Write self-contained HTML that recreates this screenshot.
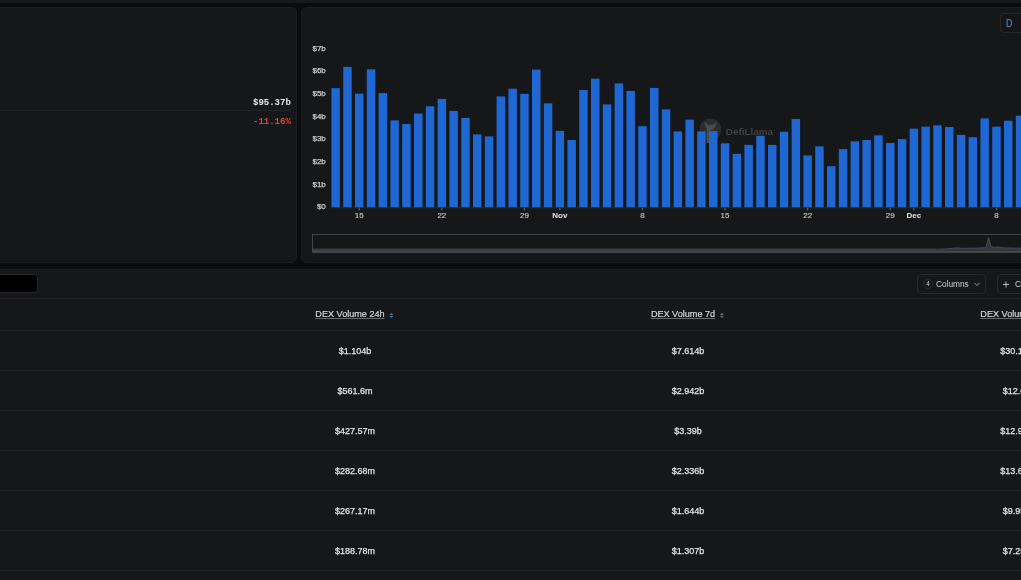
<!DOCTYPE html>
<html><head><meta charset="utf-8">
<style>
*{margin:0;padding:0;box-sizing:border-box}
html,body{width:1021px;height:580px;overflow:hidden;background:#0b0c0e;font-family:"Liberation Sans",sans-serif}
.abs{position:absolute}
#topstrip{position:absolute;left:0;top:0;width:1021px;height:3px;background:#18191c}
.card{position:absolute;background:#161719;border:1px solid #1c1d20;border-radius:6px}
#lcard{left:-20px;top:7px;width:317px;height:256px}
#ccard{left:301.4px;top:7px;width:740px;height:256px}
.mono{font-family:"Liberation Mono",monospace;font-weight:bold;position:absolute;font-size:9px;line-height:10px;white-space:nowrap}
#sep1{position:absolute;left:0;top:110px;width:291px;height:1px;background:#222326}
#dbtn{position:absolute;left:1000px;top:13px;width:40px;height:20px;border:1px solid #26282b;border-radius:4px;background:#141517}
#dbtn span{position:absolute;left:4.8px;top:4.6px;font-size:10.2px;line-height:10px;color:#5b88d4;-webkit-text-stroke:0.1px #5b88d4;transform:scaleX(0.86);transform-origin:0 0}
svg{position:absolute;left:0;top:0}
.bars rect{fill:#1f67d2}
.yl text{font-size:8px;fill:#cdcdcd;stroke:#cdcdcd;stroke-width:0.25px;text-anchor:end}
.md{font-size:8px;fill:#c4c4c4;stroke:#c4c4c4;stroke-width:0.15px;text-anchor:middle}
.mb{font-size:8px;fill:#e6e6e6;font-weight:bold;text-anchor:middle}
.ticks line{stroke:#77787a;stroke-width:0.9}
#table{position:absolute;left:0;top:269px;width:1021px;height:320px;background:#161719}
#search{position:absolute;left:-20px;top:274px;width:58px;height:19px;background:#000;border:1px solid #26282b;border-radius:4px}
.hline{position:absolute;left:0;width:1021px;height:1px;background:#222326}
.btn{position:absolute;top:274px;height:20px;border:1px solid #26282b;border-radius:4px}
.th{position:absolute;top:309px;font-size:9.1px;line-height:10px;color:#d6d6d6;-webkit-text-stroke:0.2px #d6d6d6;white-space:nowrap;transform:translateX(-50%)}
.th u{text-decoration:underline;text-decoration-color:#6a6b6d;text-underline-offset:1px}
.row{position:absolute;left:0;width:1021px;height:40px}
.v{position:absolute;top:15.8px;font-size:9px;line-height:10px;color:#e2e2e2;-webkit-text-stroke:0.25px #e2e2e2;white-space:nowrap;transform:translateX(-50%)}
.si{display:inline-block;position:relative;width:5px;height:7px;vertical-align:-2.5px;margin-left:2.5px}
.si i{position:absolute;left:0;width:0;height:0;border-left:2.5px solid transparent;border-right:2.5px solid transparent}
.si .up{top:0;border-bottom:2.7px solid #6f7175}
.si .dn{top:3.5px;border-top:2.7px solid #6f7175}
.v,.th,.mono,svg,#dbtn,.abs{will-change:transform}
</style></head><body>
<div id="topstrip"></div>
<div class="card" id="lcard"></div>
<div class="card" id="ccard"></div>
<div class="mono" style="right:730px;top:98px;color:#e8e8e8">$95.37b</div>
<div id="sep1"></div>
<div class="mono" style="right:730px;top:117px;color:#dc463b">-11.16%</div>
<div id="dbtn"><span>D</span></div>
<svg width="1021" height="580" viewBox="0 0 1021 580">
<g opacity="0.9">
<circle cx="710.3" cy="129.6" r="11" fill="#2e2f31"/>
<path d="M704 121.5 L708.5 125 L712.5 125 L717 121.5 L715 127 L713 129.5 L710 130.5 L709.2 143 L706.5 143 L706.8 129 L705.5 126.5 Z" fill="#505153"/>
<text x="725.8" y="135" font-size="9.9" font-weight="bold" fill="#454649">DefiLlama</text>
</g>
<g class="bars">
<rect x="331.40" y="88.1" width="8.5" height="119.4"/>
<rect x="343.20" y="66.9" width="8.5" height="140.6"/>
<rect x="355.00" y="93.6" width="8.5" height="113.9"/>
<rect x="366.80" y="69.3" width="8.5" height="138.2"/>
<rect x="378.60" y="93.1" width="8.5" height="114.4"/>
<rect x="390.40" y="120.4" width="8.5" height="87.1"/>
<rect x="402.20" y="124.0" width="8.5" height="83.5"/>
<rect x="414.00" y="113.5" width="8.5" height="94.0"/>
<rect x="425.80" y="106.3" width="8.5" height="101.2"/>
<rect x="437.60" y="98.9" width="8.5" height="108.6"/>
<rect x="449.40" y="111.0" width="8.5" height="96.5"/>
<rect x="461.20" y="117.9" width="8.5" height="89.6"/>
<rect x="473.00" y="134.4" width="8.5" height="73.1"/>
<rect x="484.80" y="136.4" width="8.5" height="71.1"/>
<rect x="496.60" y="96.4" width="8.5" height="111.1"/>
<rect x="508.40" y="88.7" width="8.5" height="118.8"/>
<rect x="520.20" y="93.9" width="8.5" height="113.6"/>
<rect x="532.00" y="69.6" width="8.5" height="137.9"/>
<rect x="543.80" y="103.3" width="8.5" height="104.2"/>
<rect x="555.60" y="130.9" width="8.5" height="76.6"/>
<rect x="567.40" y="140.0" width="8.5" height="67.5"/>
<rect x="579.20" y="90.0" width="8.5" height="117.5"/>
<rect x="591.00" y="78.7" width="8.5" height="128.8"/>
<rect x="602.80" y="104.4" width="8.5" height="103.1"/>
<rect x="614.60" y="83.4" width="8.5" height="124.1"/>
<rect x="626.40" y="90.9" width="8.5" height="116.6"/>
<rect x="638.20" y="126.2" width="8.5" height="81.3"/>
<rect x="650.00" y="87.9" width="8.5" height="119.6"/>
<rect x="661.80" y="109.3" width="8.5" height="98.2"/>
<rect x="673.60" y="131.4" width="8.5" height="76.1"/>
<rect x="685.40" y="119.6" width="8.5" height="87.9"/>
<rect x="697.20" y="131.4" width="8.5" height="76.1"/>
<rect x="709.00" y="131.1" width="8.5" height="76.4"/>
<rect x="720.80" y="143.3" width="8.5" height="64.2"/>
<rect x="732.60" y="153.8" width="8.5" height="53.7"/>
<rect x="744.40" y="144.9" width="8.5" height="62.6"/>
<rect x="756.20" y="135.8" width="8.5" height="71.7"/>
<rect x="768.00" y="144.9" width="8.5" height="62.6"/>
<rect x="779.80" y="131.7" width="8.5" height="75.8"/>
<rect x="791.60" y="119.0" width="8.5" height="88.5"/>
<rect x="803.40" y="155.4" width="8.5" height="52.1"/>
<rect x="815.20" y="146.3" width="8.5" height="61.2"/>
<rect x="827.00" y="166.2" width="8.5" height="41.3"/>
<rect x="838.80" y="149.1" width="8.5" height="58.4"/>
<rect x="850.60" y="141.3" width="8.5" height="66.2"/>
<rect x="862.40" y="140.0" width="8.5" height="67.5"/>
<rect x="874.20" y="135.3" width="8.5" height="72.2"/>
<rect x="886.00" y="143.0" width="8.5" height="64.5"/>
<rect x="897.80" y="139.1" width="8.5" height="68.4"/>
<rect x="909.60" y="128.7" width="8.5" height="78.8"/>
<rect x="921.40" y="126.7" width="8.5" height="80.8"/>
<rect x="933.20" y="125.3" width="8.5" height="82.2"/>
<rect x="945.00" y="127.0" width="8.5" height="80.5"/>
<rect x="956.80" y="134.9" width="8.5" height="72.6"/>
<rect x="968.60" y="137.2" width="8.5" height="70.3"/>
<rect x="980.40" y="118.4" width="8.5" height="89.1"/>
<rect x="992.20" y="126.7" width="8.5" height="80.8"/>
<rect x="1004.00" y="120.7" width="8.5" height="86.8"/>
<rect x="1015.80" y="115.7" width="8.5" height="91.8"/>
</g>
<line x1="331" y1="207.8" x2="1021" y2="207.8" stroke="#2a2b2e" stroke-width="1"/>
<g class="ticks"><line x1="359.25" y1="207.8" x2="359.25" y2="210.4"/>
<line x1="441.85" y1="207.8" x2="441.85" y2="210.4"/>
<line x1="524.45" y1="207.8" x2="524.45" y2="210.4"/>
<line x1="559.85" y1="207.8" x2="559.85" y2="210.4"/>
<line x1="642.45" y1="207.8" x2="642.45" y2="210.4"/>
<line x1="725.05" y1="207.8" x2="725.05" y2="210.4"/>
<line x1="807.65" y1="207.8" x2="807.65" y2="210.4"/>
<line x1="890.25" y1="207.8" x2="890.25" y2="210.4"/>
<line x1="913.85" y1="207.8" x2="913.85" y2="210.4"/>
<line x1="996.45" y1="207.8" x2="996.45" y2="210.4"/>
</g>
<g class="yl"><text x="325.8" y="209.1">$0</text>
<text x="325.8" y="186.5">$1b</text>
<text x="325.8" y="163.8">$2b</text>
<text x="325.8" y="141.2">$3b</text>
<text x="325.8" y="118.6">$4b</text>
<text x="325.8" y="96.0">$5b</text>
<text x="325.8" y="73.3">$6b</text>
<text x="325.8" y="50.7">$7b</text>
</g>
<g><text class="md" x="359.25" y="218.3">15</text>
<text class="md" x="441.85" y="218.3">22</text>
<text class="md" x="524.45" y="218.3">29</text>
<text class="mb" x="559.85" y="218.3">Nov</text>
<text class="md" x="642.45" y="218.3">8</text>
<text class="md" x="725.05" y="218.3">15</text>
<text class="md" x="807.65" y="218.3">22</text>
<text class="md" x="890.25" y="218.3">29</text>
<text class="mb" x="913.85" y="218.3">Dec</text>
<text class="md" x="996.45" y="218.3">8</text>
</g>
<rect x="312.5" y="234.5" width="720" height="17.5" fill="none" stroke="#434448" stroke-width="1"/>
<path d="M313 249.2 L940 249.2 L950 248.6 L956 247.8 L962 248.3 L970 248.2 L980 248 L986 247.6 L988.5 237.6 L991 246.5 L995 247.6 L998 246.8 L1002 247.8 L1021 248.2 L1021 251.8 L313 251.8 Z" fill="#34363c" stroke="#4d5160" stroke-width="0.8"/>
<line x1="312" y1="252" x2="1021" y2="252" stroke="#505156" stroke-width="1"/>
</svg>
<div id="table"></div>
<div class="hline" style="top:269px;background:#1c1d20"></div>
<div id="search"></div>
<div class="btn" style="left:917px;width:69px"></div>
<div class="abs" style="left:923px;top:279px;width:10px;height:10px;border:1px solid #2a2c2f;border-radius:50%;font-size:6.5px;line-height:8px;text-align:center;color:#cfcfcf">4</div>
<div class="abs" style="left:936px;top:279px;font-size:8.3px;line-height:10px;color:#cfcfcf">Columns</div>
<svg width="1021" height="580"><path d="M974.5 283 L977 285.5 L979.5 283" stroke="#aaa" stroke-width="0.9" fill="none"/><path d="M1006 281.5 V287.5 M1003 284.5 H1009" stroke="#ccc" stroke-width="0.9"/></svg>
<div class="btn" style="left:997px;width:60px"></div>
<div class="abs" style="left:1015px;top:279px;font-size:8.3px;line-height:10px;color:#cfcfcf">C</div>
<div class="hline" style="top:298px"></div>
<div class="th" style="left:355px"><u>DEX Volume 24h</u> <span class="si"><i class="up" style="border-bottom-color:#6f7175"></i><i class="dn" style="border-top-color:#2a7cf0"></i></span></div>
<div class="th" style="left:687.5px"><u>DEX Volume 7d</u> <span class="si"><i class="up"></i><i class="dn"></i></span></div>
<div class="th" style="left:1019.5px"><u>DEX Volume 30d</u> <span class="si"><i class="up"></i><i class="dn"></i></span></div>
<div class="hline" style="top:330px"></div><div class="hline" style="top:370px"></div><div class="hline" style="top:410px"></div><div class="hline" style="top:450px"></div><div class="hline" style="top:490px"></div><div class="hline" style="top:530px"></div><div class="hline" style="top:570px"></div>
<div class="row" style="top:330px"><span class="v" style="left:355px">$1.104b</span><span class="v" style="left:687.5px">$7.614b</span><span class="v" style="left:1018.6px">$30.174b</span></div>
<div class="row" style="top:370px"><span class="v" style="left:355px">$561.6m</span><span class="v" style="left:687.5px">$2.942b</span><span class="v" style="left:1018.6px">$12.66b</span></div>
<div class="row" style="top:410px"><span class="v" style="left:355px">$427.57m</span><span class="v" style="left:687.5px">$3.39b</span><span class="v" style="left:1018.6px">$12.937b</span></div>
<div class="row" style="top:450px"><span class="v" style="left:355px">$282.68m</span><span class="v" style="left:687.5px">$2.336b</span><span class="v" style="left:1018.6px">$13.637b</span></div>
<div class="row" style="top:490px"><span class="v" style="left:355px">$267.17m</span><span class="v" style="left:687.5px">$1.644b</span><span class="v" style="left:1018.6px">$9.953b</span></div>
<div class="row" style="top:530px"><span class="v" style="left:355px">$188.78m</span><span class="v" style="left:687.5px">$1.307b</span><span class="v" style="left:1018.6px">$7.259b</span></div>

</body></html>
